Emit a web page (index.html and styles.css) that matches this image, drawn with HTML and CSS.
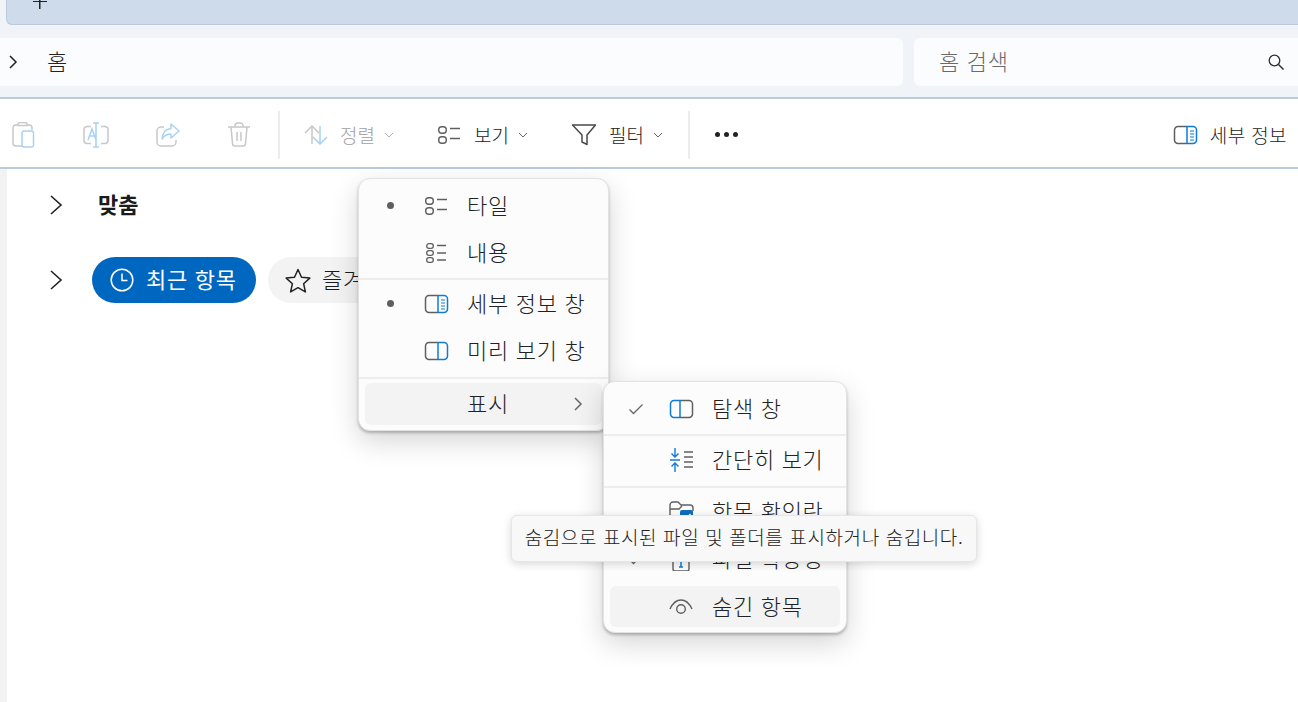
FILE: index.html
```html
<!DOCTYPE html>
<html lang="ko">
<head>
<meta charset="utf-8">
<title>홈</title>
<link rel="stylesheet" href="styles.css">
</head>
<body>
<svg class="defs" width="0" height="0" aria-hidden="true">
  <symbol id="tiles" viewBox="0 0 24 20"><g fill="none" stroke="#5f5f5f" stroke-width="1.4"><rect x="1.7" y="1.7" width="7.6" height="6.6" rx="3"/><rect x="1.7" y="11.7" width="7.6" height="6.6" rx="3"/><path d="M13 3.5h10M13 13.5h10" stroke-width="1.5"/></g></symbol>
  <symbol id="content" viewBox="0 0 24 22"><g fill="none" stroke="#5f5f5f" stroke-width="1.3"><rect x="2.7" y="1.7" width="6.6" height="4.6" rx="2.2"/><rect x="2.7" y="8.7" width="6.6" height="4.6" rx="2.2"/><rect x="2.7" y="15.7" width="6.6" height="4.6" rx="2.2"/><path d="M13 3.5h9M13 11h9M13 18h9"/></g></symbol>
  <symbol id="details" viewBox="0 0 25 20"><path d="M14 1.5H5a3.5 3.5 0 0 0-3.500 3.500v10a3.500 3.500 0 0 0 3.500 3.500h9" fill="none" stroke="#5f5f5f" stroke-width="1.500"/><path d="M14 1v18M14 1.500h6a3.500 3.500 0 0 1 3.500 3.500v10a3.500 3.500 0 0 1-3.500 3.500h-6" fill="none" stroke="#0f7bd6" stroke-width="1.500"/><path d="M17 6h4M17 9h4M17 12h4M17 15h4" stroke="#0f7bd6" stroke-width="1.200"/></symbol>
  <symbol id="preview" viewBox="0 0 25 20"><path d="M14 1.500H5a3.500 3.500 0 0 0-3.500 3.500v10a3.500 3.500 0 0 0 3.500 3.500h9" fill="none" stroke="#5f5f5f" stroke-width="1.500"/><path d="M14 1v18M14 1.500h6a3.500 3.500 0 0 1 3.500 3.500v10a3.500 3.500 0 0 1-3.500 3.500h-6" fill="none" stroke="#0f7bd6" stroke-width="1.500"/></symbol>
  <symbol id="nav" viewBox="0 0 25 20"><path d="M11 1.500h9a3.500 3.500 0 0 1 3.500 3.500v10a3.500 3.500 0 0 1-3.500 3.500h-9" fill="none" stroke="#5f5f5f" stroke-width="1.500"/><path d="M11 1v18M11 1.500H5a3.500 3.500 0 0 0-3.500 3.500v10a3.500 3.500 0 0 0 3.500 3.500h6" fill="none" stroke="#0f7bd6" stroke-width="1.500"/></symbol>
  <symbol id="chev" viewBox="0 0 12 16"><path d="M3 2l6 6-6 6" fill="none" stroke="currentColor" stroke-width="1.500"/></symbol>
  <symbol id="down" viewBox="0 0 10 6"><path d="M1 1l4 4 4-4" fill="none" stroke="currentColor" stroke-width="1"/></symbol>
</svg>

<header class="tabstrip">
  <div class="tab"><span class="plus"></span></div>
</header>

<div class="addressbar">
  <div class="crumbs">
    <svg class="crumb-chev" width="12" height="16"><use href="#chev"/></svg>
    <span class="crumb">홈</span>
  </div>
  <div class="search">
    <span class="search-text">홈 검색</span>
    <svg width="18" height="18" viewBox="0 0 18 18"><circle cx="7.500" cy="7.500" r="5.300" fill="none" stroke="#2b2b2b" stroke-width="1.300"/><path d="M11.500 11.500l5 5" stroke="#2b2b2b" stroke-width="1.400"/></svg>
  </div>
</div>

<nav class="toolbar">
  <div class="tool-icons">
    <svg width="24" height="26" viewBox="0 0 24 26"><path d="M6 3H4a3 3 0 0 0-3 3v15a3 3 0 0 0 3 3h6M15 3h2a3 3 0 0 1 3 3v2M6 2.500a2 2 0 0 1 2-2h5a2 2 0 0 1 2 2v1H6z" fill="none" stroke="#c8c8c8" stroke-width="1.500"/><rect x="10" y="9" width="11.500" height="16" rx="2" fill="none" stroke="#a8d2f5" stroke-width="1.500"/></svg>
    <svg width="26" height="26" viewBox="0 0 26 26"><path d="M8 4.500H4a3 3 0 0 0-3 3v11a3 3 0 0 0 3 3h4M18 4.500h4a3 3 0 0 1 3 3v11a3 3 0 0 1-3 3h-4" fill="none" stroke="#c8c8c8" stroke-width="1.500"/><path d="M13 1v24M10 1h6M10 25h6M5 18l4-11 4 11M6.500 14h5" fill="none" stroke="#a8d2f5" stroke-width="1.500"/></svg>
    <svg width="24" height="24" viewBox="0 0 24 24"><path d="M8 4H5a4 4 0 0 0-4 4v11a4 4 0 0 0 4 4h11a4 4 0 0 0 4-4v-2" fill="none" stroke="#c8c8c8" stroke-width="1.500"/><path d="M15 1l8 7-8 7v-4c-4 0-6.500 1-9 5 .5-6 4-10 9-10.500z" fill="none" stroke="#a8d2f5" stroke-width="1.500" stroke-linejoin="round"/></svg>
    <svg class="tool-trash" width="22" height="25" viewBox="0 0 22 25"><path d="M0 5h22M7 5V3.500a3 3 0 0 1 3-2.500h2a3 3 0 0 1 3 2.500V5M3 5l1.500 16.500a2.500 2.500 0 0 0 2.500 2.500h8a2.500 2.500 0 0 0 2.500-2.500L19 5M9 10v9M13 10v9" fill="none" stroke="#c8c8c8" stroke-width="1.500"/></svg>
  </div>
  <span class="tool-sep tool-sep-a"></span>
  <div class="tool tool-sort is-disabled">
    <svg width="25" height="20" viewBox="0 0 25 20"><path d="M8 19V1M1 8l7-7 7 7" fill="none" stroke="#c8c8c8" stroke-width="1.500"/><path d="M16 1v18M9 12l7 7 7-7" fill="none" stroke="#a8d2f5" stroke-width="1.500"/></svg>
    <span>정렬</span>
    <svg class="caret" width="10" height="6"><use href="#down"/></svg>
  </div>
  <div class="tool tool-view">
    <svg width="24" height="20"><use href="#tiles"/></svg>
    <span>보기</span>
    <svg class="caret" width="10" height="6"><use href="#down"/></svg>
  </div>
  <div class="tool tool-filter">
    <svg width="26" height="24" viewBox="0 0 26 24"><path d="M1.500 2h23l-8.500 10v9.500l-5-2.500v-7z" fill="none" stroke="#4a4a4a" stroke-width="1.500" stroke-linejoin="round"/></svg>
    <span>필터</span>
    <svg class="caret" width="10" height="6"><use href="#down"/></svg>
  </div>
  <span class="tool-sep tool-sep-b"></span>
  <div class="more"><i></i><i></i><i></i></div>
  <div class="tool tool-details">
    <svg width="25" height="20"><use href="#details"/></svg>
    <span>세부 정보</span>
  </div>
</nav>

<main class="content">
  <div class="group-row group-row-first">
    <svg class="group-chev" width="14" height="20" viewBox="0 0 14 20"><path d="M2 1l10 9-10 9" fill="none" stroke="#222" stroke-width="1.600"/></svg>
    <strong class="group-title">맞춤</strong>
  </div>
  <div class="group-row group-row-second">
    <svg class="group-chev" width="14" height="20" viewBox="0 0 14 20"><path d="M2 1l10 9-10 9" fill="none" stroke="#222" stroke-width="1.600"/></svg>
    <div class="chip chip-active">
      <svg width="24" height="24" viewBox="0 0 24 24"><circle cx="12" cy="12" r="10.800" fill="none" stroke="#fff" stroke-width="1.500"/><path d="M12 5.500V12.500h5.500" fill="none" stroke="#fff" stroke-width="1.500"/></svg>
      <span>최근 항목</span>
    </div>
    <div class="chip">
      <svg width="26" height="25" viewBox="0 0 26 25"><path d="M13 1.500l3.500 7.700 8.300.9-6.200 5.600 1.800 8.200L13 19.700l-7.400 4.200 1.800-8.200-6.200-5.600 8.300-.9z" fill="none" stroke="#222" stroke-width="1.500" stroke-linejoin="round"/></svg>
      <span>즐겨찾기</span>
    </div>
  </div>
</main>

<div class="menu menu-view">
  <div class="item"><i class="dot"></i><svg width="24" height="20"><use href="#tiles"/></svg><span>타일</span></div>
  <div class="item"><span></span><svg width="24" height="22"><use href="#content"/></svg><span>내용</span></div>
  <hr class="sep">
  <div class="item"><i class="dot"></i><svg width="25" height="20"><use href="#details"/></svg><span>세부 정보 창</span></div>
  <div class="item"><span></span><svg width="25" height="20"><use href="#preview"/></svg><span>미리 보기 창</span></div>
  <hr class="sep sep-low">
  <div class="item is-hover item-show"><span></span><span></span><span>표시</span><svg class="item-chev" width="12" height="16"><use href="#chev"/></svg></div>
</div>

<div class="menu menu-show">
  <div class="item"><svg class="check" width="16" height="12" viewBox="0 0 16 12"><path d="M1.500 6.500l4 4 9-9" fill="none" stroke="#666" stroke-width="1.300"/></svg><svg width="25" height="20"><use href="#nav"/></svg><span>탐색 창</span></div>
  <hr class="sep">
  <div class="item"><span></span><svg width="25" height="24" viewBox="0 0 25 24"><path d="M6 0v9M2.500 5.500L6 9l3.500-3.500M6 24v-9M2.500 18.500L6 15l3.500 3.500M1 12h10" fill="none" stroke="#0f7bd6" stroke-width="1.400"/><path d="M15 4h9M15 9h9M15 14h9M15 19h9" stroke="#5f5f5f" stroke-width="1.300"/></svg><span>간단히 보기</span></div>
  <hr class="sep sep-low">
  <div class="item"><span></span><svg width="25" height="22" viewBox="0 0 25 22"><path d="M11 20H4a3 3 0 0 1-3-3V4a3 3 0 0 1 3-3h5l3 3h9a3 3 0 0 1 3 3v3M1 8h9l3-3" fill="none" stroke="#5f5f5f" stroke-width="1.400"/><rect x="11" y="9" width="13" height="13" rx="2" fill="#0f6cbd"/><path d="M14 15.500l2.500 2.500 5-5" fill="none" stroke="#fff" stroke-width="1.400"/></svg><span>항목 확인란</span></div>
  <div class="item"><svg class="check" width="16" height="12" viewBox="0 0 16 12"><path d="M1.500 6.500l4 4 9-9" fill="none" stroke="#666" stroke-width="1.300"/></svg><svg width="25" height="24" viewBox="0 0 25 24"><path d="M4 1h14a2 2 0 0 1 2 2v19a2 2 0 0 1-2 2H6a2 2 0 0 1-2-2z" fill="none" stroke="#5f5f5f" stroke-width="1.400"/><path d="M10 11h4M12 11v9M10 20h4" stroke="#0f7bd6" stroke-width="1.500"/></svg><span>파일 확장명</span></div>
  <div class="item is-hover item-hidden"><span></span><svg width="24" height="18" viewBox="0 0 24 18"><path d="M1 11C4 4.500 8 2 12 2s8 2.500 11 9" fill="none" stroke="#5f5f5f" stroke-width="1.400"/><circle cx="12" cy="11" r="4.300" fill="none" stroke="#5f5f5f" stroke-width="1.400"/></svg><span>숨긴 항목</span></div>
</div>

<div class="tooltip">숨김으로 표시된 파일 및 폴더를 표시하거나 숨깁니다.</div>
</body>
</html>
```

FILE: styles.css
```css
* { box-sizing: border-box; }

html, body {
  margin: 0;
  height: 100%;
}

body {
  position: relative;
  width: 1298px;
  height: 702px;
  overflow: hidden;
  background: #fff;
  color: #1b1b1b;
  font-family: "Noto Sans CJK KR", "Noto Sans", sans-serif;
  font-weight: 300;
}

.defs { position: absolute; }

.tabstrip {
  height: 38px;
  background: #f0f4f9;
  padding-left: 6px;
}

.tab {
  height: 25px;
  background: #cddbea;
  border-left: 1px solid #bccbdc;
  border-bottom: 1px solid #bccbdc;
  border-bottom-left-radius: 6px;
  position: relative;
}

.plus {
  position: absolute;
  left: 26px;
  top: 0;
  width: 14px;
  height: 9px;
  background:
    linear-gradient(#222, #222) 6px 0 / 1.500px 9px no-repeat,
    linear-gradient(#222, #222) 0 1px / 14px 1.200px no-repeat;
}

.addressbar {
  display: flex;
  gap: 11px;
  height: 61px;
  padding-bottom: 11px;
  background: #f0f4f9;
  border-bottom: 2px solid #bccbdb;
}

.crumbs {
  flex: 0 0 903px;
  display: flex;
  align-items: center;
  background: #fbfcfe;
  border-radius: 0 6px 6px 0;
  padding-left: 7px;
  color: #222;
}

.crumb-chev { flex: none; }

.crumb {
  margin-left: 28px;
  padding-bottom: 4px;
  font-size: 22px;
}

.search {
  flex: 1;
  display: flex;
  align-items: center;
  justify-content: space-between;
  background: #fbfcfe;
  border-radius: 6px 0 0 6px;
  padding: 0 13px 0 25px;
}

.search-text {
  padding-bottom: 4px;
  font-size: 22px;
  letter-spacing: .7px;
  color: #6a6a6a;
}

.toolbar {
  display: flex;
  align-items: center;
  height: 70px;
  border-bottom: 2px solid #bccbdb;
  background: #fff;
  padding: 3px 0 0 12px;
}

.tool-icons {
  display: flex;
  align-items: center;
  gap: 47px;
  width: 240px;
}

.tool-trash { margin-left: 1px; }

.tool-sep {
  width: 2px;
  height: 48px;
  background: #ececec;
  flex: none;
}

.tool-sep-a { margin-left: 26px; }
.tool-sep-b { margin-left: 25px; }

.tool {
  display: flex;
  align-items: center;
  font-size: 19px;
  color: #222;
}

.tool span { margin-left: 12px; }

.caret { margin-left: 9px; color: #666; }

.is-disabled { color: #a0a0a0; }
.is-disabled .caret { color: #b0b0b0; }

.tool-sort { margin-left: 24px; }
.tool-sort span { margin-left: 11px; }
.tool-view { margin-left: 43px; }
.tool-view span { margin-left: 13px; }
.tool-filter { margin-left: 43px; }

.more {
  display: flex;
  gap: 4px;
  margin-left: 25px;
}

.more i {
  width: 5px;
  height: 5px;
  border-radius: 50%;
  background: #222;
}

.tool-details {
  margin-left: auto;
  margin-right: 11px;
  letter-spacing: .4px;
}

.content {
  height: 533px;
  border-left: 7px solid #f3f3f3;
  padding: 17px 0 0 42px;
}

.group-row {
  display: flex;
  align-items: center;
}

.group-row-first { height: 38px; }
.group-row-second { height: 46px; margin-top: 33px; }

.group-chev { flex: none; }

.group-title {
  margin-left: 35px;
  padding-bottom: 4px;
  font-size: 22px;
  font-weight: 700;
  color: #1b1b1b;
}

.chip {
  display: flex;
  align-items: center;
  gap: 11px;
  height: 46px;
  border-radius: 23px;
  padding: 0 17px;
  font-size: 22px;
  letter-spacing: .7px;
  background: #f3f3f3;
  margin-left: 12px;
  white-space: nowrap;
}

.chip span { padding-bottom: 4px; }

.group-row .chip-active {
  gap: 12px;
  padding-left: 18px;
  background: #0067c0;
  color: #fff;
  margin-left: 29px;
  width: 164px;
  font-weight: 400;
}

.menu {
  position: absolute;
  display: flex;
  flex-direction: column;
  background: #fcfcfc;
  border: 1px solid #e2e2e2;
  border-radius: 12px;
  padding: 3px 0 2px;
  box-shadow: 0 2px 3px rgba(0, 0, 0, .24), 0 10px 28px rgba(0, 0, 0, .17);
}

.menu-view { left: 358px; top: 178px; width: 251px; height: 253px; }
.menu-show { left: 603px; top: 381px; width: 244px; height: 252px; }

.item {
  display: grid;
  grid-template-columns: 59px 43px 1fr auto;
  align-items: center;
  flex: none;
  height: 41px;
  margin: 3px 6px;
  border-radius: 6px;
  font-size: 22px;
  letter-spacing: .7px;
  color: #222;
}

.item > span { padding-bottom: 4px; }

.item.is-hover { background: #f3f3f3; }

.item-show { margin-top: 4px; height: 42px; }
.item-hidden { margin-top: 4px; }

.dot {
  justify-self: start;
  margin-left: 22px;
  width: 7px;
  height: 7px;
  border-radius: 50%;
  background: #5f5f5f;
}

.check { justify-self: start; margin-left: 18px; }

.item-chev { margin-right: 18px; color: #666; }

.sep {
  flex: none;
  height: 2px;
  width: 100%;
  margin: 2px 0 0;
  border: 0;
  background: #ededed;
}

.sep-low { margin-top: 3px; }

.tooltip {
  position: absolute;
  left: 511px;
  top: 515px;
  width: 466px;
  height: 47px;
  display: flex;
  align-items: center;
  justify-content: center;
  padding-bottom: 4px;
  background: #f8f8f8;
  border: 1px solid #e6e6e6;
  border-radius: 6px;
  box-shadow: 0 2px 8px rgba(0, 0, 0, .16);
  font-size: 19px;
  letter-spacing: .6px;
  color: #222;
  white-space: nowrap;
}
```
